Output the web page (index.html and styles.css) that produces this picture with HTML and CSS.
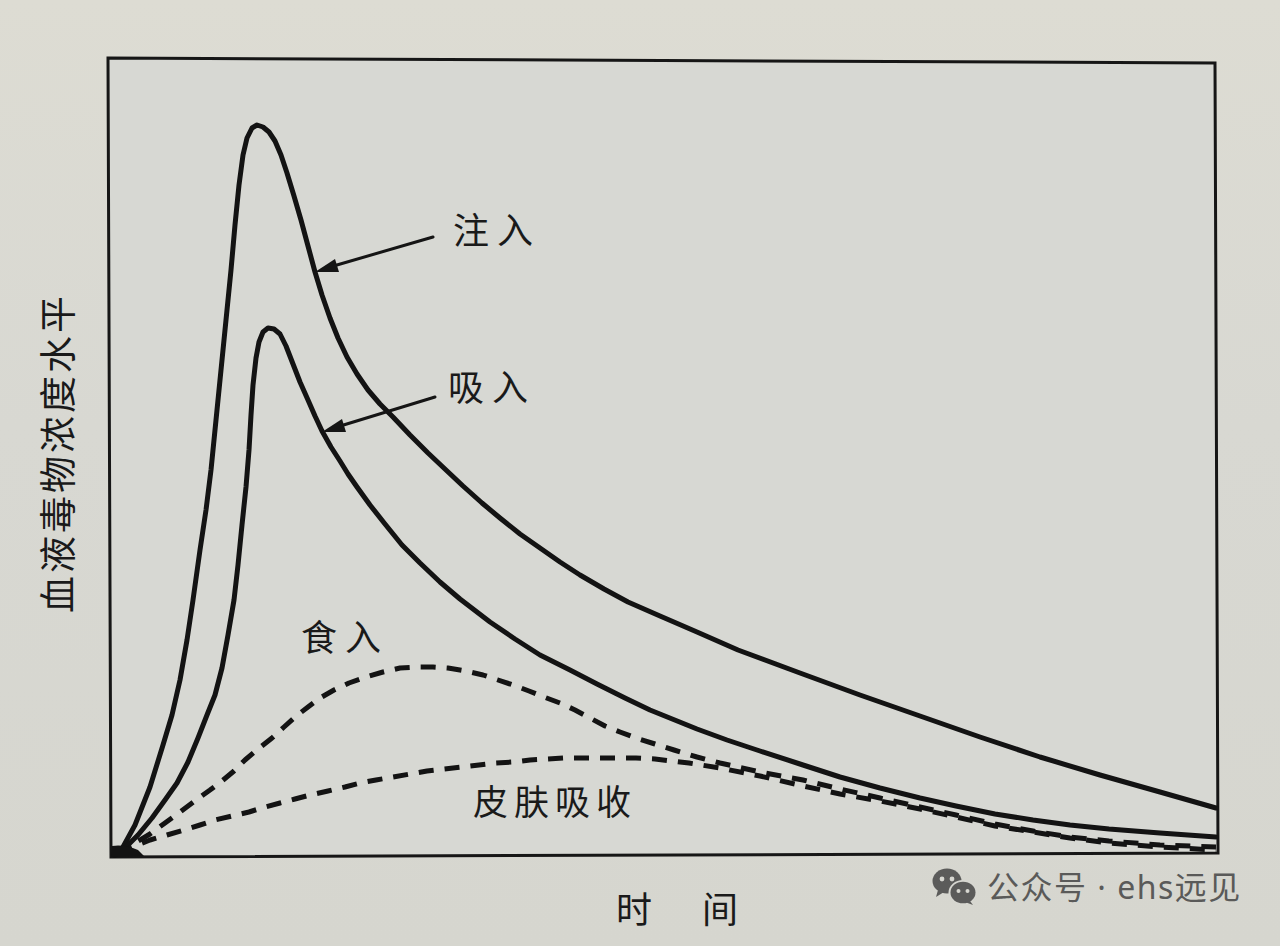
FILE: index.html
```html
<!DOCTYPE html>
<html lang="zh-CN">
<head>
<meta charset="utf-8">
<title>血液毒物浓度水平</title>
<link rel="stylesheet" href="styles.css">
</head>
<body>
<main class="page">
  <svg class="chart" viewBox="0 0 1280 946" width="1280" height="946" xmlns="http://www.w3.org/2000/svg">
    <polygon class="frame" points="108,58 1215,63 1218,853 111,857"/>

    <polyline class="curve" points="115,855 123,847 135,825 150,787 163,745 172,715 180,680 187,640 193,600 200,550 206,510 211,470 216,420 221,370 226,320 231,270 235,225 239,185 243,155 247,138 252,128 257,125 263,127 269,132 275,141 281,155 287,173 294,196 301,220 308,246 315,272 322,295 330,318 338,338 347,357 357,374 368,390 380,404 393,417 410,435 428,453 446,470 463,486 482,503 500,518 520,534 540,548 560,562 580,575 604,589 628,602 660,616 697,632 738,650 800,673 860,695 920,716 980,737 1040,757 1100,775 1160,792 1216,808"/>

    <polyline class="curve" points="115,855 125,848 138,835 152,818 165,800 177,783 188,762 198,738 207,715 215,695 222,668 228,635 234,600 238,565 242,525 246,487 249,450 251,415 253,385 256,358 259,342 263,332 268,328 274,329 280,334 286,346 293,364 300,382 308,400 315,416 322,431 331,447 340,461 348,474 357,487 370,505 385,524 402,545 420,563 440,582 460,599 490,622 515,639 540,655 570,670 597,684 625,698 650,710 697,729 727,740 760,751 803,765 840,777 880,788 920,798 956,806 995,814 1033,820 1070,825 1109,829 1160,833 1216,837"/>

    <polyline class="dash" points="116,854 130,846 150,834 165,823 180,812 196,800 210,790 222,781 234,771 245,760 258,749 272,738 284,727 295,717 308,707 320,698 334,690 349,683 366,677 383,672 400,668 418,667 433,667 448,668 466,671 483,675 498,680 513,685 529,691 544,697 560,703 575,710 590,718 605,726 620,732 636,738 655,744 674,750 697,757 720,763 760,772 803,780 840,789 880,798 920,807 956,815 995,824 1033,831 1070,837 1109,841 1160,845 1216,847"/>

    <polyline class="dash" points="118,853 135,846 150,840 167,835 184,830 200,825 215,820 232,816 249,812 265,807 280,803 295,799 310,795 328,791 345,787 360,783 376,780 393,777 410,774 427,771 444,769 462,767 479,765 496,763 513,762 530,760 548,759 565,758 582,758 600,758 617,758 636,758 655,759 672,761 689,763 720,768 760,776 803,786 840,794 880,801 920,809 956,817 995,826 1033,832 1070,838 1109,843 1160,847 1216,850"/>

    <path class="origin" d="M111,857 L112,846 Q124,844 138,850 L144,856 Z"/>

    <line class="pointer" x1="433" y1="237" x2="330" y2="267"/>
    <polygon class="head" points="315,272 339,272 335,259"/>
    <line class="pointer" x1="435" y1="397" x2="337" y2="427"/>
    <polygon class="head" points="322,432 346,432 342,419"/>

    <text class="label" x="453" y="244">注入</text>
    <text class="label" x="448" y="401">吸入</text>
    <text class="label" x="301" y="651">食入</text>
    <text class="label skin" x="473" y="815">皮肤吸收</text>

    <text class="axis" x="616" y="923">时</text>
    <text class="axis" x="702" y="923">间</text>
    <text class="axis yaxis" transform="translate(72,613) rotate(-90)">血液毒物浓度水平</text>
  </svg>

  <div class="wm">
    <svg class="wm-icon" viewBox="0 0 46 38" width="46" height="38" xmlns="http://www.w3.org/2000/svg">
      <ellipse cx="15" cy="13" rx="14.5" ry="12.5" class="wm-fill"/>
      <path d="M6,22 L4,29 L12,24 Z" class="wm-fill"/>
      <ellipse cx="31" cy="24.5" rx="14.5" ry="12.5" class="wm-gap"/>
      <ellipse cx="31" cy="24.5" rx="12.5" ry="10.8" class="wm-fill"/>
      <path d="M38,33 L41,37 L33,34 Z" class="wm-fill"/>
      <circle cx="10" cy="11" r="2.4" class="wm-gap"/>
      <circle cx="20" cy="11" r="2.4" class="wm-gap"/>
      <circle cx="26.5" cy="23" r="2" class="wm-gap"/>
      <circle cx="35.5" cy="23" r="2" class="wm-gap"/>
    </svg>
    <span class="wm-text">公众号 · ehs远见</span>
  </div>
</main>
</body>
</html>
```

FILE: styles.css
```css
html, body {
  margin: 0;
  padding: 0;
}

body {
  width: 1280px;
  height: 946px;
  overflow: hidden;
  background: linear-gradient(180deg, #dddcd3 0%, #d8d8d2 45%, #d6d6cf 100%);
  font-family: "Noto Sans CJK SC", "Noto Sans", sans-serif;
}

.page {
  position: relative;
  width: 1280px;
  height: 946px;
}

.chart {
  display: block;
}

.frame {
  fill: #d7d8d3;
  stroke: #161616;
  stroke-width: 3;
  stroke-linejoin: miter;
}

.curve {
  fill: none;
  stroke: #131313;
  stroke-width: 5;
  stroke-linejoin: round;
  stroke-linecap: round;
}

.dash {
  fill: none;
  stroke: #131313;
  stroke-width: 5;
  stroke-dasharray: 15 11;
  stroke-linejoin: round;
}

.origin {
  fill: #131313;
}

.pointer {
  stroke: #151515;
  stroke-width: 3;
  stroke-linecap: round;
}

.head {
  fill: #151515;
}

.label {
  font-family: "Noto Sans CJK SC", "Noto Sans", sans-serif;
  font-size: 36px;
  letter-spacing: 8px;
  fill: #1a1a1a;
}

.skin {
  font-size: 35px;
  letter-spacing: 6px;
}

.axis {
  font-family: "Noto Sans CJK SC", "Noto Sans", sans-serif;
  font-size: 36px;
  fill: #1a1a1a;
}

.yaxis {
  font-size: 37px;
  letter-spacing: 3px;
}

.wm {
  position: absolute;
  left: 932px;
  top: 868px;
  display: flex;
  align-items: center;
  gap: 9px;
}

.wm-icon {
  display: block;
}

.wm-fill {
  fill: #5b5b5a;
}

.wm-gap {
  fill: #d7d7d1;
}

.wm-text {
  font-family: "Noto Sans", "Noto Sans CJK SC", sans-serif;
  font-size: 32px;
  line-height: 36px;
  color: #5a5a59;
  letter-spacing: 1.5px;
}
```
